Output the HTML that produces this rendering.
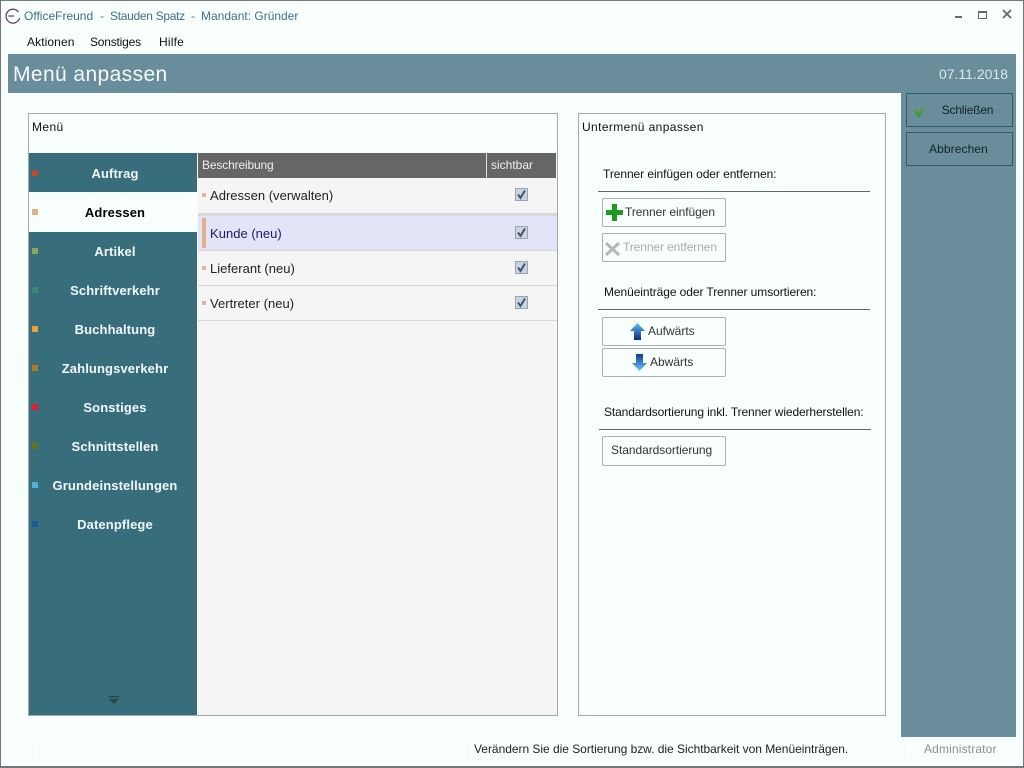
<!DOCTYPE html>
<html lang="de">
<head>
<meta charset="utf-8">
<title>OfficeFreund</title>
<style>
html,body{margin:0;padding:0;}
body{width:1024px;height:768px;overflow:hidden;position:relative;background:#f8fffd;font-family:"Liberation Sans",sans-serif;font-size:12px;color:#222;}
.a{position:absolute;white-space:nowrap;}
.t{position:absolute;white-space:nowrap;line-height:16px;}
.nav{position:absolute;left:31px;width:168px;height:39px;text-align:center;font-weight:bold;font-size:13px;line-height:41px;color:#f0f8fa;letter-spacing:.12px;}
.sq{position:absolute;left:32px;width:6px;height:6px;}
.row{position:absolute;left:198px;width:359px;height:34px;border-bottom:1px solid #d8d8d8;background:#f5f5f5;}
.row .l{position:absolute;left:12px;top:9px;font-size:13px;line-height:17px;color:#222;white-space:nowrap;letter-spacing:.02px;}
.row .m{position:absolute;left:4px;top:15px;width:4px;height:4px;background:#e0b69a;}
.cb{position:absolute;left:317px;top:10px;}
.btn{position:absolute;left:602px;width:122px;height:27px;border:1px solid #a8b0b0;border-radius:2px;background:#f8fffd;color:#333;}
.line{position:absolute;height:1px;background:#5f6a6a;}
.side{position:absolute;left:906px;width:105px;height:32px;border:1px solid #2d5c6c;background:#6a8d9b;text-align:center;line-height:32px;color:#10242c;}
</style>
</head>
<body>
<div class="a" style="left:0;top:0;width:1024px;height:1px;background:#70787c;"></div>
<div class="a" style="left:0;top:0;width:1px;height:768px;background:#70787c;"></div>
<div class="a" style="right:0;top:0;width:1px;height:768px;background:#70787c;"></div>
<div class="a" style="left:0;top:766px;width:1024px;height:2px;background:#70787c;"></div>

<svg class="a" style="left:4px;top:7px;" width="18" height="18" viewBox="0 0 18 18"><path d="M14.6 5.2A6.9 6.9 0 1 0 15.6 11" fill="none" stroke="#6e2a62" stroke-width="1.2"/><path d="M4.5 9h5.5" stroke="#333" stroke-width="1.1"/></svg>
<div class="t" style="left:24px;top:8px;color:#3f6f86;">OfficeFreund</div>
<div class="t" style="left:100px;top:8px;color:#3f6f86;">-</div>
<div class="t" style="left:110px;top:8px;color:#3f6f86;letter-spacing:-.3px;">Stauden Spatz</div>
<div class="t" style="left:191px;top:8px;color:#3f6f86;">-</div>
<div class="t" style="left:201px;top:8px;color:#3f6f86;">Mandant: Gründer</div>

<div class="a" style="left:955px;top:16px;width:7px;height:2px;background:#666;"></div>
<div class="a" style="left:978px;top:11px;width:7px;height:5px;border:1px solid #666;border-top-width:2px;"></div>
<svg class="a" style="left:1002px;top:9px;" width="10" height="10" viewBox="0 0 10 10"><path d="M1 1l8 8M9 1l-8 8" stroke="#666" stroke-width="1.8"/></svg>

<div class="t" style="left:27px;top:34px;color:#111;letter-spacing:.1px;">Aktionen</div>
<div class="t" style="left:90px;top:34px;color:#111;letter-spacing:-.2px;">Sonstiges</div>
<div class="t" style="left:159px;top:34px;color:#111;letter-spacing:.2px;">Hilfe</div>

<div class="a" style="left:8px;top:54px;width:1008px;height:39px;background:#6a8d9b;"></div>
<div class="a" style="left:901px;top:93px;width:115px;height:644px;background:#6a8d9b;"></div>
<div class="t" style="left:13px;top:62px;font-size:21px;line-height:26px;color:#f4fafa;letter-spacing:.4px;">Menü anpassen</div>
<div class="t" style="right:16px;top:66px;font-size:14px;line-height:16px;color:#dce8ec;">07.11.2018</div>

<div class="side" style="top:93px;color:#10242c;"><span style="position:relative;left:8px;letter-spacing:-.2px;">Schließen</span></div>
<svg class="a" style="left:912px;top:101px;" width="18" height="18" viewBox="0 0 18 18"><defs><linearGradient id="c" x1="0" y1="0" x2="0" y2="1"><stop offset="0" stop-color="#7aa060"/><stop offset="1" stop-color="#2e9a2a"/></linearGradient></defs><path d="M1 9l3-1 3 3C9 8 12 5 15 3 12 7 10 11 8 16H6z" fill="url(#c)"/></svg>
<div class="side" style="top:132px;"><span style="position:relative;left:-1px;letter-spacing:.1px;">Abbrechen</span></div>

<!-- left panel -->
<div class="a" style="left:28px;top:113px;width:528px;height:601px;border:1px solid #a8a8a8;"></div>
<div class="t" style="left:32px;top:119px;color:#111;letter-spacing:.4px;">Menü</div>
<div class="a" style="left:29px;top:153px;width:168px;height:562px;background:#386d7c;"></div>
<div class="a" style="left:198px;top:153px;width:359px;height:562px;background:#f5f5f5;"></div>
<div class="a" style="left:29px;top:192px;width:168px;height:40px;background:#f8fffd;"></div>

<div class="nav" style="top:153px;">Auftrag</div>
<div class="nav" style="top:192px;color:#000;">Adressen</div>
<div class="nav" style="top:231px;">Artikel</div>
<div class="nav" style="top:270px;">Schriftverkehr</div>
<div class="nav" style="top:309px;">Buchhaltung</div>
<div class="nav" style="top:348px;">Zahlungsverkehr</div>
<div class="nav" style="top:387px;">Sonstiges</div>
<div class="nav" style="top:426px;">Schnittstellen</div>
<div class="nav" style="top:465px;">Grundeinstellungen</div>
<div class="nav" style="top:504px;">Datenpflege</div>

<div class="sq" style="top:170px;background:#c0492c;"></div>
<div class="sq" style="top:209px;background:#e0b28c;"></div>
<div class="sq" style="top:248px;background:#88a858;"></div>
<div class="sq" style="top:287px;background:#3a8a70;"></div>
<div class="sq" style="top:326px;background:#f0a030;"></div>
<div class="sq" style="top:365px;background:#b07a20;"></div>
<div class="sq" style="top:404px;background:#e02030;"></div>
<div class="sq" style="top:443px;background:#6a7018;"></div>
<div class="sq" style="top:482px;background:#50b0d8;"></div>
<div class="sq" style="top:521px;background:#1a5a98;"></div>

<svg class="a" style="left:108px;top:695px;" width="12" height="10" viewBox="0 0 12 10"><path d="M1 1h10v1.5H1zM1 4h10L6 9z" fill="#2c4650"/></svg>

<!-- table header -->
<div class="a" style="left:198px;top:153px;width:358px;height:25px;background:#666;"></div>
<div class="a" style="left:486px;top:153px;width:1px;height:25px;background:#ddd;"></div>
<div class="t" style="left:202px;top:157px;color:#eee;letter-spacing:-.15px;">Beschreibung</div>
<div class="t" style="left:491px;top:157px;color:#eee;">sichtbar</div>

<!-- rows -->
<div class="row" style="top:178px;height:35px;border-bottom:none;"><div class="m"></div><div class="l">Adressen (verwalten)</div>
<svg class="cb" style="top:10px;" width="13" height="13" viewBox="0 0 13 13"><rect x=".5" y=".5" width="12" height="12" fill="#c8d4e4" stroke="#9aa4ac"/><path d="M3 6.5l2.5 3.4L10 2.5" fill="none" stroke="#44566c" stroke-width="2"/></svg></div>
<div class="a" style="left:198px;top:213px;width:359px;height:3px;background:#d8d8d8;"></div>
<div class="row" style="top:216px;height:34px;background:#e3e4f8;"><div class="a" style="left:4px;top:2px;width:4px;height:30px;background:#e0b08c;"></div><div class="l" style="color:#1a1a6a;">Kunde (neu)</div>
<svg class="cb" style="top:10px;" width="13" height="13" viewBox="0 0 13 13"><rect x=".5" y=".5" width="12" height="12" fill="#c8d4e4" stroke="#9aa4ac"/><path d="M3 6.5l2.5 3.4L10 2.5" fill="none" stroke="#44566c" stroke-width="2"/></svg></div>
<div class="row" style="top:251px;"><div class="m"></div><div class="l">Lieferant (neu)</div>
<svg class="cb" style="top:10px;" width="13" height="13" viewBox="0 0 13 13"><rect x=".5" y=".5" width="12" height="12" fill="#c8d4e4" stroke="#9aa4ac"/><path d="M3 6.5l2.5 3.4L10 2.5" fill="none" stroke="#44566c" stroke-width="2"/></svg></div>
<div class="row" style="top:286px;"><div class="m"></div><div class="l">Vertreter (neu)</div>
<svg class="cb" style="top:10px;" width="13" height="13" viewBox="0 0 13 13"><rect x=".5" y=".5" width="12" height="12" fill="#c8d4e4" stroke="#9aa4ac"/><path d="M3 6.5l2.5 3.4L10 2.5" fill="none" stroke="#44566c" stroke-width="2"/></svg></div>

<!-- right panel -->
<div class="a" style="left:578px;top:113px;width:306px;height:601px;border:1px solid #a8a8a8;"></div>
<div class="t" style="left:582px;top:119px;color:#111;letter-spacing:.39px;">Untermenü anpassen</div>

<div class="t" style="left:603px;top:166px;color:#111;letter-spacing:-.07px;">Trenner einfügen oder entfernen:</div>
<div class="line" style="left:598px;top:191px;width:272px;"></div>
<div class="btn" style="top:198px;"></div>
<svg class="a" style="left:606px;top:204px;" width="17" height="17" viewBox="0 0 17 17"><path d="M6 0h5v6h6v5h-6v6H6v-6H0V6h6z" fill="#1e9a1e"/></svg>
<div class="t" style="left:625px;top:204px;color:#333;letter-spacing:-.06px;">Trenner einfügen</div>
<div class="btn" style="top:233px;"></div>
<svg class="a" style="left:604px;top:240px;" width="17" height="17" viewBox="0 0 17 17"><path d="M2 3l13 12M15 3L2 15" stroke="#b4b8b8" stroke-width="3"/></svg>
<div class="t" style="left:623px;top:239px;color:#a8acac;letter-spacing:-.1px;">Trenner entfernen</div>

<div class="t" style="left:604px;top:284px;color:#111;letter-spacing:-.08px;">Menüeinträge oder Trenner umsortieren:</div>
<div class="line" style="left:598px;top:309px;width:272px;"></div>
<div class="btn" style="top:317px;"></div>
<svg class="a" style="left:630px;top:323px;" width="15" height="17" viewBox="0 0 15 17"><defs><linearGradient id="u" x1="0" y1="0" x2="0" y2="1"><stop offset="0" stop-color="#5cc0ee"/><stop offset="1" stop-color="#0c2c80"/></linearGradient><linearGradient id="d" x1="0" y1="0" x2="0" y2="1"><stop offset="0" stop-color="#0c3c90"/><stop offset="1" stop-color="#6cc8f4"/></linearGradient></defs><path d="M7.5 0L15 8h-4v9H4V8H0z" fill="url(#u)"/></svg>
<div class="t" style="left:648px;top:323px;color:#333;">Aufwärts</div>
<div class="btn" style="top:348px;"></div>
<svg class="a" style="left:632px;top:354px;" width="15" height="17" viewBox="0 0 15 17"><path d="M4 0h7v9h4l-7.5 8L0 9h4z" fill="url(#d)"/></svg>
<div class="t" style="left:650px;top:354px;color:#333;">Abwärts</div>

<div class="t" style="left:604px;top:404px;color:#111;letter-spacing:-.12px;">Standardsortierung inkl. Trenner wiederherstellen:</div>
<div class="line" style="left:599px;top:429px;width:272px;"></div>
<div class="btn" style="top:436px;height:28px;"></div>
<div class="t" style="left:611px;top:442px;color:#333;letter-spacing:-.05px;">Standardsortierung</div>

<!-- status bar -->
<div class="t" style="left:474px;top:741px;color:#222;letter-spacing:-.03px;">Verändern Sie die Sortierung bzw. die Sichtbarkeit von Menüeinträgen.</div>
<div class="t" style="left:924px;top:741px;color:#8a8f90;letter-spacing:.15px;">Administrator</div>
<div class="a" style="left:904px;top:740px;width:1px;height:24px;background:#f2f8f6;"></div>
<div class="a" style="left:32px;top:740px;width:1px;height:24px;background:#f2f8f6;"></div>
<div class="a" style="left:468px;top:740px;width:1px;height:24px;background:#f2f8f6;"></div>
</body>
</html>
